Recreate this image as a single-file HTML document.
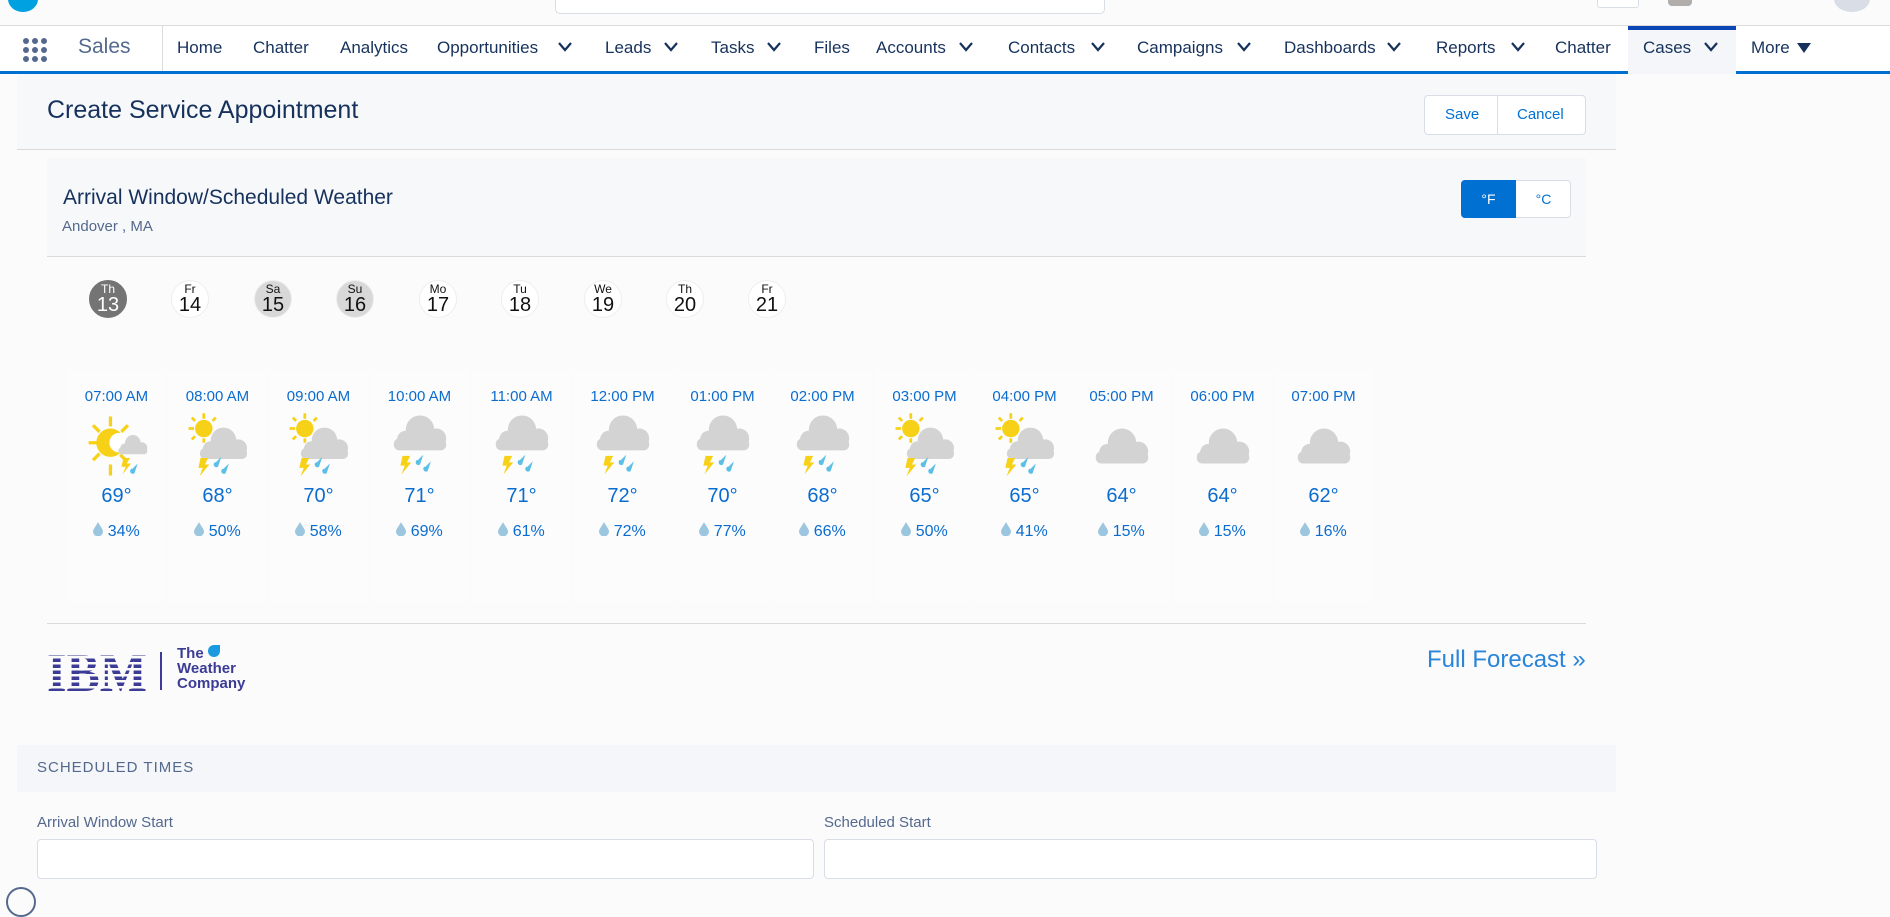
<!DOCTYPE html>
<html><head><meta charset="utf-8">
<style>
*{box-sizing:border-box;margin:0;padding:0}
body{width:1890px;height:895px;overflow:hidden;background:#fbfbfc;font-family:"Liberation Sans",sans-serif;position:relative;color:#16325c}
.a{position:absolute;white-space:nowrap}
.nav{position:absolute;top:25px;left:0;width:1890px;height:46px;background:#fff;border-top:1px solid #dddbda}
.blue{position:absolute;top:71px;left:0;width:1890px;height:3px;background:#0070d2}
.ni{position:absolute;top:38px;font-size:17px;color:#16325c}
.chev{position:absolute;top:42px;width:14px;height:10px}
.col{position:absolute;top:370px;width:99px;height:232px;background:#fcfcfd;text-align:center}
.t{position:absolute;top:18px;width:100%;font-size:15px;color:#0a6ccf}
.tp{position:absolute;top:115px;width:100%;font-size:20px;color:#0a6ccf}
.pc{position:absolute;top:152px;width:100%;font-size:16px;color:#0a6ccf}
.ic{position:absolute;top:40px;left:15px;width:70px;height:72px}
.day{position:absolute;top:280px;width:38px;height:38px;border-radius:50%;background:#fff;border:1px solid #eee;text-align:center;color:#111}
.day b{display:block;font-weight:normal;font-size:12px;line-height:12px;margin-top:2px}
.day i{display:block;font-style:normal;font-size:20px;line-height:20px}
</style></head><body>
<svg width="0" height="0" style="position:absolute">
<defs>
<g id="cl"><circle cx="30" cy="22" r="13" fill="#d3d3d3"/><circle cx="45" cy="30" r="9" fill="#d3d3d3"/><circle cx="17" cy="31" r="8" fill="#d3d3d3"/><rect x="6" y="30" width="48" height="11" rx="5" fill="#d3d3d3"/></g>
<g id="br"><path d="M16 48h7l-3 6h4l-9 11 3-8h-4z" fill="#f7d117"/><path d="M30 52l5-5-3 9a2.5 2.5 0 0 1-3-4z" fill="#5bbfe6"/><path d="M37 58l5-5-3 9a2.5 2.5 0 0 1-3-4z" fill="#5bbfe6"/></g>
<g id="sun"><circle cx="17" cy="17" r="8" fill="#f7d117"/><g stroke="#f7d117" stroke-width="2.5"><path d="M17 3v5M17 26v4M3 17h5M6 7l3 3M28 7l-3 3M6 27l3-3"/></g></g>
<symbol id="D" viewBox="0 0 60 66"><use href="#cl" transform="translate(0,8)"/></symbol>
<symbol id="C" viewBox="0 0 60 66"><use href="#cl" transform="translate(0,-4)"/><use href="#br" transform="translate(-2,-6)"/></symbol>
<symbol id="B" viewBox="0 0 60 66"><use href="#sun"/><use href="#cl" transform="translate(8,8) scale(0.9)"/><use href="#br" transform="translate(-2,-4) "/></symbol>
<symbol id="A" viewBox="0 0 60 66"><g stroke="#f7d117" stroke-width="3"><path d="M24 6v9M24 50v10M4 30h10M8 14l6 6M40 14l-6 6M8 46l6-6M38 46l-5-5"/></g><circle cx="24" cy="30" r="13" fill="#f7d117"/><circle cx="32" cy="30" r="9" fill="#fff"/><use href="#cl" transform="translate(28,18) scale(0.55)"/><path d="M36 44h6l-3 5h4l-8 10 3-7h-4z" fill="#f7d117"/><path d="M44 54l5-5-3 9a2.5 2.5 0 0 1-3-4z" fill="#5bbfe6"/></symbol>
<symbol id="drop" viewBox="0 0 10 14"><path d="M5 0C3 4 0 7 0 9.5a5 5 0 0 0 10 0C10 7 7 4 5 0z" fill="#9cc6df"/></symbol>
</defs></svg>

<!-- header -->
<div class="a" style="left:0;top:0;width:1890px;height:25px;background:#fbfbfc"></div>
<div class="a" style="left:8px;top:-14px;width:30px;height:26px;border-radius:50%;background:#00a1e0"></div>
<div class="a" style="left:555px;top:-2px;width:550px;height:16px;border:1px solid #d8dde6;border-radius:0 0 5px 5px;background:#fff"></div>
<div class="a" style="left:1597px;top:-2px;width:42px;height:10px;border:1px solid #d8dde6;border-radius:3px;background:#fff"></div>
<div class="a" style="left:1668px;top:-4px;width:24px;height:10px;border-radius:4px;background:#b0adab"></div>
<div class="a" style="left:1834px;top:-14px;width:36px;height:26px;border-radius:50%;background:#d8dde6"></div>

<div class="nav"></div>
<div class="a" style="left:1628px;top:26px;width:108px;height:46px;background:#f4f6f9;border-top:4px solid #0b46b5"></div>
<div class="blue"></div>
<div class="a" style="left:1628px;top:71px;width:108px;height:3px;background:#f4f6f9"></div>
<svg class="a" style="left:22px;top:37px" width="26" height="26"><g fill="#54698d"><circle cx="4" cy="4" r="3"/><circle cx="13" cy="4" r="3"/><circle cx="22" cy="4" r="3"/><circle cx="4" cy="13" r="3"/><circle cx="13" cy="13" r="3"/><circle cx="22" cy="13" r="3"/><circle cx="4" cy="22" r="3"/><circle cx="13" cy="22" r="3"/><circle cx="22" cy="22" r="3"/></g></svg>
<div class="a" style="left:78px;top:35px;font-size:21px;color:#54698d">Sales</div>
<div class="a" style="left:162px;top:26px;width:1px;height:45px;background:#dddbda"></div>
<div class="ni" style="left:177px">Home</div>
<div class="ni" style="left:253px">Chatter</div>
<div class="ni" style="left:340px">Analytics</div>
<div class="ni" style="left:437px">Opportunities</div>
<div class="ni" style="left:605px">Leads</div>
<div class="ni" style="left:711px">Tasks</div>
<div class="ni" style="left:814px">Files</div>
<div class="ni" style="left:876px">Accounts</div>
<div class="ni" style="left:1008px">Contacts</div>
<div class="ni" style="left:1137px">Campaigns</div>
<div class="ni" style="left:1284px">Dashboards</div>
<div class="ni" style="left:1436px">Reports</div>
<div class="ni" style="left:1555px">Chatter</div>
<div class="ni" style="left:1643px">Cases</div>
<div class="ni" style="left:1751px">More</div>
<svg class="a" style="left:1797px;top:43px" width="14" height="10"><path d="M0 0h14L7 10z" fill="#16325c"/></svg>
<svg class="chev" style="left:558px"><path d="M1 1l6 7 6-7" stroke="#16325c" stroke-width="2.2" fill="none"/></svg>
<svg class="chev" style="left:664px"><path d="M1 1l6 7 6-7" stroke="#16325c" stroke-width="2.2" fill="none"/></svg>
<svg class="chev" style="left:767px"><path d="M1 1l6 7 6-7" stroke="#16325c" stroke-width="2.2" fill="none"/></svg>
<svg class="chev" style="left:959px"><path d="M1 1l6 7 6-7" stroke="#16325c" stroke-width="2.2" fill="none"/></svg>
<svg class="chev" style="left:1091px"><path d="M1 1l6 7 6-7" stroke="#16325c" stroke-width="2.2" fill="none"/></svg>
<svg class="chev" style="left:1237px"><path d="M1 1l6 7 6-7" stroke="#16325c" stroke-width="2.2" fill="none"/></svg>
<svg class="chev" style="left:1387px"><path d="M1 1l6 7 6-7" stroke="#16325c" stroke-width="2.2" fill="none"/></svg>
<svg class="chev" style="left:1511px"><path d="M1 1l6 7 6-7" stroke="#16325c" stroke-width="2.2" fill="none"/></svg>
<svg class="chev" style="left:1704px"><path d="M1 1l6 7 6-7" stroke="#16325c" stroke-width="2.2" fill="none"/></svg>

<!-- card header -->
<div class="a" style="left:17px;top:74px;width:1599px;height:76px;background:#f7f8fa;border-bottom:1px solid #dddbda"></div>
<div class="a" style="left:47px;top:96px;font-size:25px;color:#16325c">Create Service Appointment</div>
<div class="a" style="left:1424px;top:95px;width:162px;height:40px;border:1px solid #d8dde6;border-radius:4px;background:#fff"></div>
<div class="a" style="left:1497px;top:96px;width:1px;height:38px;background:#d8dde6"></div>
<div class="a" style="left:1445px;top:106px;font-size:15px;color:#0070d2">Save</div>
<div class="a" style="left:1517px;top:106px;font-size:15px;color:#0070d2">Cancel</div>

<!-- weather header -->
<div class="a" style="left:47px;top:158px;width:1539px;height:99px;background:#f7f8fa;border-bottom:1px solid #dddbda"></div>
<div class="a" style="left:63px;top:186px;font-size:21px;color:#16325c">Arrival Window/Scheduled Weather</div>
<div class="a" style="left:62px;top:218px;font-size:15px;color:#54698d">Andover , MA</div>
<div class="a" style="left:1461px;top:180px;width:110px;height:38px;border:1px solid #d8dde6;border-radius:4px;background:#fff"></div>
<div class="a" style="left:1461px;top:180px;width:55px;height:38px;border-radius:4px 0 0 4px;background:#0070d2;color:#fff;font-size:14px;text-align:center;line-height:38px">°F</div>
<div class="a" style="left:1516px;top:180px;width:55px;height:38px;color:#0070d2;font-size:14px;text-align:center;line-height:38px">°C</div>

<!-- days -->
<div class="day" style="left:89px;background:#747474;color:#fff;border-color:#747474"><b>Th</b><i>13</i></div>
<div class="day" style="left:171px"><b>Fr</b><i>14</i></div>
<div class="day" style="left:254px;background:#d8d8d8"><b>Sa</b><i>15</i></div>
<div class="day" style="left:336px;background:#d8d8d8"><b>Su</b><i>16</i></div>
<div class="day" style="left:419px"><b>Mo</b><i>17</i></div>
<div class="day" style="left:501px"><b>Tu</b><i>18</i></div>
<div class="day" style="left:584px"><b>We</b><i>19</i></div>
<div class="day" style="left:666px"><b>Th</b><i>20</i></div>
<div class="day" style="left:748px"><b>Fr</b><i>21</i></div>

<!-- hours -->
<div class="col" style="left:67px"><div class="t">07:00 AM</div><svg class="ic"><use href="#A"/></svg><div class="tp">69°</div><div class="pc"><svg width="10" height="14"><use href="#drop"/></svg> 34%</div></div>
<div class="col" style="left:168px"><div class="t">08:00 AM</div><svg class="ic"><use href="#B"/></svg><div class="tp">68°</div><div class="pc"><svg width="10" height="14"><use href="#drop"/></svg> 50%</div></div>
<div class="col" style="left:269px"><div class="t">09:00 AM</div><svg class="ic"><use href="#B"/></svg><div class="tp">70°</div><div class="pc"><svg width="10" height="14"><use href="#drop"/></svg> 58%</div></div>
<div class="col" style="left:370px"><div class="t">10:00 AM</div><svg class="ic"><use href="#C"/></svg><div class="tp">71°</div><div class="pc"><svg width="10" height="14"><use href="#drop"/></svg> 69%</div></div>
<div class="col" style="left:472px"><div class="t">11:00 AM</div><svg class="ic"><use href="#C"/></svg><div class="tp">71°</div><div class="pc"><svg width="10" height="14"><use href="#drop"/></svg> 61%</div></div>
<div class="col" style="left:573px"><div class="t">12:00 PM</div><svg class="ic"><use href="#C"/></svg><div class="tp">72°</div><div class="pc"><svg width="10" height="14"><use href="#drop"/></svg> 72%</div></div>
<div class="col" style="left:673px"><div class="t">01:00 PM</div><svg class="ic"><use href="#C"/></svg><div class="tp">70°</div><div class="pc"><svg width="10" height="14"><use href="#drop"/></svg> 77%</div></div>
<div class="col" style="left:773px"><div class="t">02:00 PM</div><svg class="ic"><use href="#C"/></svg><div class="tp">68°</div><div class="pc"><svg width="10" height="14"><use href="#drop"/></svg> 66%</div></div>
<div class="col" style="left:875px"><div class="t">03:00 PM</div><svg class="ic"><use href="#B"/></svg><div class="tp">65°</div><div class="pc"><svg width="10" height="14"><use href="#drop"/></svg> 50%</div></div>
<div class="col" style="left:975px"><div class="t">04:00 PM</div><svg class="ic"><use href="#B"/></svg><div class="tp">65°</div><div class="pc"><svg width="10" height="14"><use href="#drop"/></svg> 41%</div></div>
<div class="col" style="left:1072px"><div class="t">05:00 PM</div><svg class="ic"><use href="#D"/></svg><div class="tp">64°</div><div class="pc"><svg width="10" height="14"><use href="#drop"/></svg> 15%</div></div>
<div class="col" style="left:1173px"><div class="t">06:00 PM</div><svg class="ic"><use href="#D"/></svg><div class="tp">64°</div><div class="pc"><svg width="10" height="14"><use href="#drop"/></svg> 15%</div></div>
<div class="col" style="left:1274px"><div class="t">07:00 PM</div><svg class="ic"><use href="#D"/></svg><div class="tp">62°</div><div class="pc"><svg width="10" height="14"><use href="#drop"/></svg> 16%</div></div>

<div class="a" style="left:47px;top:623px;width:1539px;height:1px;background:#dddbda"></div>

<!-- IBM logo -->
<svg class="a" style="left:47px;top:650px" width="110" height="44">
<text x="0" y="41" font-family="Liberation Serif, serif" font-weight="bold" font-size="54" fill="#3c3c96" textLength="100" lengthAdjust="spacingAndGlyphs">IBM</text>
<g fill="#fbfbfc"><rect y="6" width="110" height="2.5"/><rect y="12" width="110" height="2.5"/><rect y="18" width="110" height="2.5"/><rect y="24" width="110" height="2.5"/><rect y="30" width="110" height="2.5"/><rect y="36" width="110" height="2.5"/></g>
</svg>
<div class="a" style="left:160px;top:652px;width:2px;height:38px;background:#3c3c96"></div>
<div class="a" style="left:177px;top:646px;font-size:15px;font-weight:bold;color:#3c3c96;line-height:15px;white-space:normal;width:80px">The<br>Weather<br>Company</div>
<div class="a" style="left:208px;top:645px;width:12px;height:12px;border-radius:50% 0 50% 50%;background:#1a9be0"></div>
<div class="a" style="left:1427px;top:646px;font-size:24px;color:#2a84d8">Full Forecast »</div>

<!-- scheduled times -->
<div class="a" style="left:17px;top:745px;width:1599px;height:47px;background:#f4f6f9"></div>
<div class="a" style="left:37px;top:759px;font-size:15px;letter-spacing:1px;color:#54698d">SCHEDULED TIMES</div>
<div class="a" style="left:37px;top:814px;font-size:15px;color:#54698d">Arrival Window Start</div>
<div class="a" style="left:824px;top:814px;font-size:15px;color:#54698d">Scheduled Start</div>
<div class="a" style="left:37px;top:839px;width:777px;height:40px;border:1px solid #d8dde6;border-radius:4px;background:#fff"></div>
<div class="a" style="left:824px;top:839px;width:773px;height:40px;border:1px solid #d8dde6;border-radius:4px;background:#fff"></div>
<div class="a" style="left:6px;top:887px;width:30px;height:30px;border-radius:50%;border:2px solid #54698d"></div>
</body></html>
